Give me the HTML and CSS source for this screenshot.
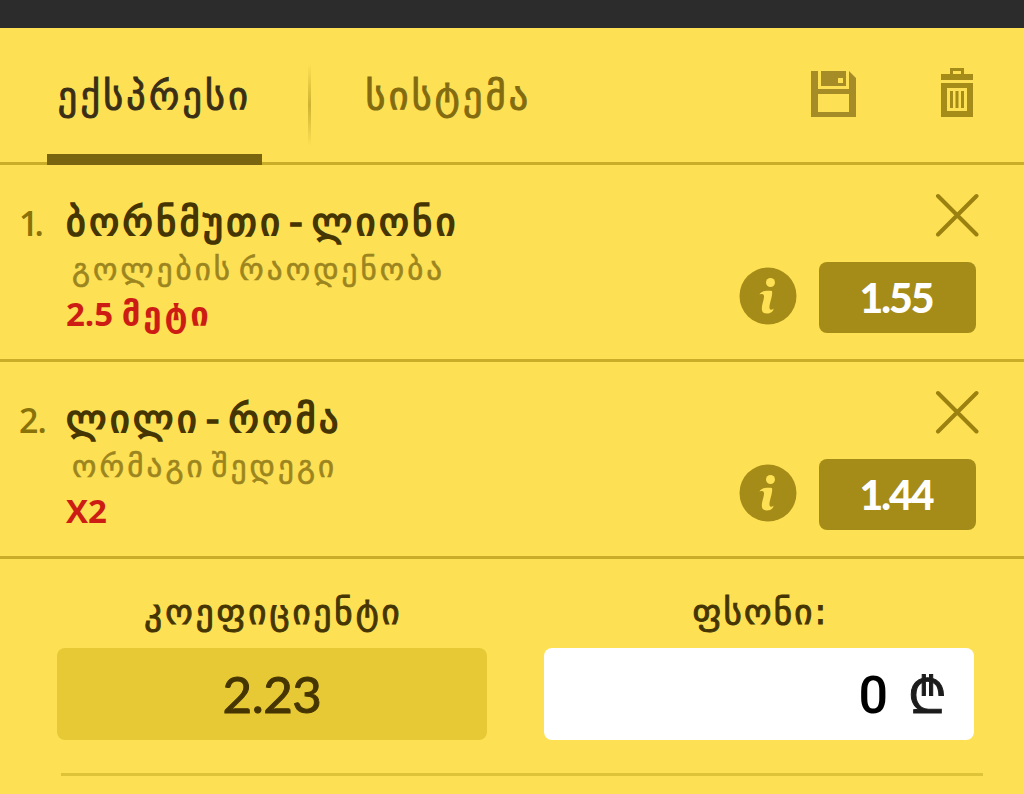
FILE: index.html
```html
<!DOCTYPE html>
<html lang="ka">
<head>
  <meta charset="UTF-8" />
  <meta name="viewport" content="width=device-width, initial-scale=1.0"/>
  <title>ბილეთი</title>
  <link rel="stylesheet" href="styles.css">
</head>
<body>

<div class="topbar"></div>

<header>
  <nav class="tabs">
    <a class="tab active"><span class="tab-text">ექსპრესი</span></a>
    <span class="divider"></span>
    <a class="tab"><span class="tab-text system">სისტემა</span></a>
  </nav>
  <div class="tools">
    <svg class="save" width="46" height="46" viewBox="0 0 46 46">
      <path fill="#a58c26" fill-rule="evenodd" d="M0 0H7V18H38V0L45 7V46H0ZM7 23V41H38V23Z"/>
      <path fill="#a58c26" fill-rule="evenodd" d="M10 0H35V15H10ZM27 7V12H32V7Z"/>
    </svg>
    <svg class="trash" width="32" height="49" viewBox="0 0 32 49">
      <path fill="#a58c18" fill-rule="evenodd" d="M9 0H23V6H32V12H0V6H9ZM12 3V6H20V3Z"/>
      <path fill="#a58c18" fill-rule="evenodd" d="M0 15H32V49H0ZM6 20V43H26V20Z"/>
      <path fill="#a58c18" d="M9 23h3v17H9zM14.500 23h3v17h-3zM20 23h3v17h-3z"/>
    </svg>
  </div>
</header>

<section class="bet">
  <div class="num first">1.</div>
  <div class="info">
    <h2 class="match">ბორნმუთი - ლიონი</h2>
    <p class="market">გოლების რაოდენობა</p>
    <p class="pick">2.5 <span>მეტი</span></p>
  </div>
  <div class="side">
    <svg class="close" width="44" height="44" viewBox="0 0 44 44">
      <path d="M3 3L41.500 41.500M41.500 3L3 41.500" stroke="#9a8110" stroke-width="4" stroke-linecap="round"/>
    </svg>
    <div class="odds-row">
      <svg class="about" width="58" height="58" viewBox="0 0 58 58">
        <circle cx="29" cy="29" r="28.500" fill="#a58c18"/>
        <circle cx="31.500" cy="15.500" r="4.500" fill="#fde053"/>
        <path fill="#fde053" d="M20.500 27.500C22 24 27 23.500 33 24C34 29 30 37 30.500 41C31 43.500 33 43 34.500 41.500C34.500 45 31 46.500 28 46.500C21 46.500 22.500 40 24.500 33C25.500 28.500 25.500 26 20.500 27.500Z"/>
      </svg>
      <div class="odds">1.55</div>
    </div>
  </div>
</section>

<section class="bet">
  <div class="num">2.</div>
  <div class="info">
    <h2 class="match">ლილი - რომა</h2>
    <p class="market">ორმაგი შედეგი</p>
    <p class="pick">X2</p>
  </div>
  <div class="side">
    <svg class="close" width="44" height="44" viewBox="0 0 44 44">
      <path d="M3 3L41.500 41.500M41.500 3L3 41.500" stroke="#9a8110" stroke-width="4" stroke-linecap="round"/>
    </svg>
    <div class="odds-row">
      <svg class="about" width="58" height="58" viewBox="0 0 58 58">
        <circle cx="29" cy="29" r="28.500" fill="#a58c18"/>
        <circle cx="31.500" cy="15.500" r="4.500" fill="#fde053"/>
        <path fill="#fde053" d="M20.500 27.500C22 24 27 23.500 33 24C34 29 30 37 30.500 41C31 43.500 33 43 34.500 41.500C34.500 45 31 46.500 28 46.500C21 46.500 22.500 40 24.500 33C25.500 28.500 25.500 26 20.500 27.500Z"/>
      </svg>
      <div class="odds">1.44</div>
    </div>
  </div>
</section>

<section class="totals">
  <div class="field">
    <label class="coef">კოეფიციენტი</label>
    <div class="box total">2.23</div>
  </div>
  <div class="field">
    <label class="stake">ფსონი:</label>
    <div class="box amount"><span class="value">0</span><span class="lari">₾</span></div>
  </div>
</section>
<hr class="end">

</body>
</html>
```
FILE: styles.css
```css
* {
  box-sizing: border-box;
}
body {
  margin: 0;
  height: 794px;
  overflow: hidden;
  background-color: #fde053;
  color: #453503;
  font-family: "DejaVu Sans", sans-serif;
  white-space: nowrap;
}
h2, p {
  margin: 0;
}
svg {
  display: block;
  fill: none;
}
.topbar {
  height: 28px;
  background-color: #2c2c2c;
}
header {
  display: flex;
  justify-content: space-between;
  height: 137px;
  padding: 0 51px 0 47px;
  border-bottom: 3px solid #c9ac28;
}
.tabs {
  display: flex;
  height: 137px;
}
.tab {
  width: 215px;
  padding-top: 45px;
  text-align: center;
  font-size: 38px;
  line-height: 46px;
  letter-spacing: 3.3px;
  color: #836b10;
  -webkit-text-stroke: 1px;
}
.tab.active {
  color: #3a2f16;
  border-bottom: 11px solid #796410;
}
.tab-text.system {
  margin-left: 2px;
}
.divider {
  width: 3px;
  height: 82px;
  margin: 36px 29px 0 46px;
  background: linear-gradient(transparent, #cfb230 50%, transparent);
}
.tools {
  display: flex;
  gap: 84px;
}
.save {
  margin-top: 43px;
}
.trash {
  margin-top: 40px;
}
.bet {
  display: flex;
  height: 197px;
  padding-right: 45px;
  border-bottom: 3px solid #c9ac28;
}
.num {
  width: 66px;
  padding: 33px 0 0 19px;
  font: 600 34px/50px "Open Sans", sans-serif;
  letter-spacing: -1px;
  color: #89720a;
}
.num.first {
  letter-spacing: -4px;
}
.info {
  flex: 1;
  padding-top: 32px;
}
.match {
  font-size: 38px;
  font-weight: normal;
  line-height: 50px;
  letter-spacing: 3.5px;
  word-spacing: -10px;
  -webkit-text-stroke: 1.6px;
}
.market {
  padding-left: 6px;
  font-size: 31px;
  line-height: 44px;
  letter-spacing: 3.1px;
  word-spacing: -7px;
  color: #9c851f;
  -webkit-text-stroke: 0.6px;
}
.pick {
  font: bold 33px/46px "Open Sans", "DejaVu Sans", sans-serif;
  color: #cc1c14;
}
.pick span {
  letter-spacing: 2.8px;
}
.side {
  display: flex;
  flex-direction: column;
  align-items: flex-end;
  padding-top: 28px;
}
.odds-row {
  display: flex;
  gap: 22px;
  margin: 25px 3px 0 0;
}
.about {
  margin-top: 5px;
}
.odds {
  width: 157px;
  height: 71px;
  padding-right: 3px;
  border-radius: 8px;
  background-color: #a58c18;
  color: #fff;
  font: 900 41px/71px Lato, sans-serif;
  letter-spacing: -2px;
  text-align: center;
}
.totals {
  display: flex;
  gap: 57px;
  padding: 30px 50px 0 57px;
}
.field {
  flex: 1;
}
.field label {
  display: block;
  height: 59px;
  padding-left: 3px;
  font-size: 35px;
  line-height: 46px;
  letter-spacing: 3px;
  text-align: center;
  -webkit-text-stroke: 1px;
}
.field .stake {
  letter-spacing: 2.2px;
}
.box {
  height: 92px;
  border-radius: 8px;
  font-size: 52px;
  line-height: 92px;
}
.total {
  background-color: #e6c935;
  font-family: Lato, sans-serif;
  font-size: 51px;
  letter-spacing: -0.5px;
  line-height: 91px;
  text-align: center;
  -webkit-text-stroke: 1px;
}
.amount {
  display: flex;
  justify-content: flex-end;
  gap: 20px;
  padding: 2px 27px 0 0;
  background-color: #fff;
  color: #000;
  font-family: Roboto, sans-serif;
  font-weight: 500;
}
.lari {
  font-size: 50px;
  color: #1c1c1c;
  -webkit-text-stroke: 1px;
}
.end {
  margin: 33px 41px 0 61px;
  border: 0;
  border-top: 3px solid #dec238;
}
```
